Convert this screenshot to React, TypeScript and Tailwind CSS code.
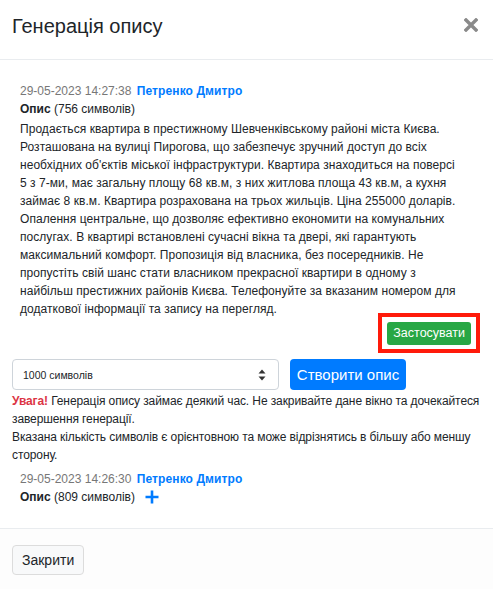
import { useState } from "react";

const font = { fontFamily: '"Liberation Sans", Arial, Helvetica, sans-serif' };

// the text is broken where the original modal breaks it
const descriptionLines = [
  "Продається квартира в престижному Шевченківському районі міста Києва.",
  "Розташована на вулиці Пирогова, що забезпечує зручний доступ до всіх",
  "необхідних об'єктів міської інфраструктури. Квартира знаходиться на поверсі",
  "5 з 7-ми, має загальну площу 68 кв.м, з них житлова площа 43 кв.м, а кухня",
  "займає 8 кв.м. Квартира розрахована на трьох жильців. Ціна 255000 доларів.",
  "Опалення центральне, що дозволяє ефективно економити на комунальних",
  "послугах. В квартирі встановлені сучасні вікна та двері, які гарантують",
  "максимальний комфорт. Пропозиція від власника, без посередників. Не",
  "пропустіть свій шанс стати власником прекрасної квартири в одному з",
  "найбільш престижних районів Києва. Телефонуйте за вказаним номером для",
  "додаткової інформації та запису на перегляд.",
];

function CloseIcon() {
  return (
    <svg viewBox="0 0 14 14" className="w-[14px] h-[14px]">
      <path d="M2 2 L12 12 M12 2 L2 12" stroke="#8a8a8a" strokeWidth="3.4" strokeLinecap="square" />
    </svg>
  );
}

function PlusIcon() {
  return (
    <svg viewBox="0 0 14 14" className="w-[14px] h-[14px]">
      <path d="M7 0.5 V13.5 M0.5 7 H13.5" stroke="#007bff" strokeWidth="2.6" />
    </svg>
  );
}

function SelectArrows() {
  return (
    <svg viewBox="0 0 8 12" className="w-[8px] h-[12px]">
      <path d="M4 0.5 L7.5 4.5 H0.5 Z M4 11.5 L7.5 7.5 H0.5 Z" fill="#333" />
    </svg>
  );
}

function EntryHeader({ date }: { date: string }) {
  return (
    <div className="leading-[18px]">
      <span className="text-[#777]">{date}</span>{" "}
      <span className="text-[#007bff] font-bold ml-[2px] tracking-[0.1px]">Петренко Дмитро</span>
    </div>
  );
}

export default function App() {
  const [length] = useState("1000 символів");

  return (
    <div className="w-[493px] h-[589px] bg-white text-[#212529] flex flex-col" style={font}>
      {/* ── Header ── */}
      <div className="flex items-start justify-between pl-[12px] pr-[15px] pt-[14px] h-[60px] border-b border-[#e9ecef]">
        <h5 className="text-[20px] leading-[24px] font-normal">Генерація опису</h5>
        <button className="mt-[4px]">
          <CloseIcon />
        </button>
      </div>

      {/* ── Body ── */}
      <div className="px-[12px] pt-[22px] text-[12px] leading-[18px] h-[469px] border-b border-[#e9ecef]">
        <div className="px-[8px]">
          <EntryHeader date="29-05-2023 14:27:38" />
          <div>
            <b>Опис</b> (756 символів)
          </div>
          <div className="mt-[2px] tracking-[0.05px]">
            {descriptionLines.map((line) => (
              <div key={line} className="whitespace-nowrap">
                {line}
              </div>
            ))}
          </div>
          <div className="flex justify-end pr-[2px] mt-[4px]">
            <div className="relative">
              <button className="h-[23px] px-[6px] rounded-[3px] bg-[#28a745] text-white text-[12.5px] leading-[23px]">
                Застосувати
              </button>
              <div className="absolute -left-[9px] -right-[9px] -top-[9px] -bottom-[8px] border-4 border-[#ff1a0a] pointer-events-none" />
            </div>
          </div>
        </div>

        <div className="flex gap-[11px] mt-[14px]">
          <div className="w-[267px] h-[31px] rounded-[4px] border border-[#ced4da] flex items-center justify-between pl-[10px] pr-[12px]">
            <span className="text-[10.5px]">{length}</span>
            <SelectArrows />
          </div>
          <button className="w-[116px] h-[31px] rounded-[4px] bg-[#007bff] text-white text-[15px]">
            Створити опис
          </button>
        </div>

        <div className="mt-[2px] tracking-[-0.1px]">
          <div className="whitespace-nowrap">
            <b className="text-[#dc3545]">Увага!</b> Генерація опису займає деякий час. Не закривайте дане вікно та
            дочекайтеся
          </div>
          <div>завершення генерації.</div>
          <div className="whitespace-nowrap">
            Вказана кількість символів є орієнтовною та може відрізнятись в більшу або меншу
          </div>
          <div>сторону.</div>
        </div>

        <div className="px-[8px] mt-[6px]">
          <EntryHeader date="29-05-2023 14:26:30" />
          <div className="flex items-center gap-[10px]">
            <span>
              <b>Опис</b> (809 символів)
            </span>
            <PlusIcon />
          </div>
        </div>
      </div>

      {/* ── Footer ── */}
      <div className="flex-1 bg-[#fdfdfd] px-[12px] pt-[16px]">
        <button className="h-[30px] px-[9px] rounded-[4px] bg-[#f8f9fa] border border-[#dcdcdc] text-[14px]">
          Закрити
        </button>
      </div>
    </div>
  );
}
